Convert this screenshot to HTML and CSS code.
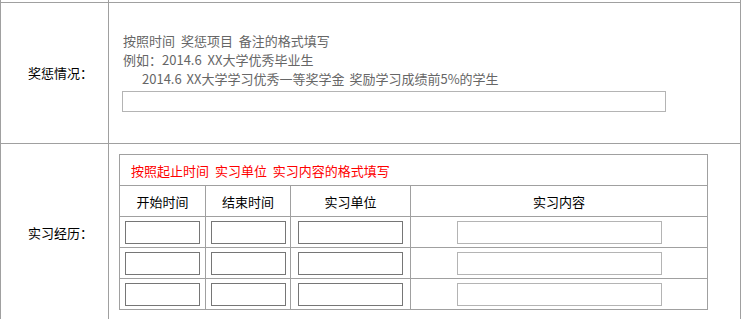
FILE: index.html
```html
<!DOCTYPE html>
<html lang="zh-CN">
<head>
  <meta charset="UTF-8" />
  <title>个人信息填写</title>
  <link rel="stylesheet" href="styles.css">
</head>
<body>

  <!-- 信息表格 -->
  <table class="form">
    <tr class="cut">
      <td class="label"></td>
      <td class="field"></td>
    </tr>

    <!-- 奖惩情况 -->
    <tr class="award">
      <td class="label">奖惩情况：</td>
      <td class="field">
        <p class="tip">按照时间 奖惩项目 备注的格式填写</p>
        <p class="tip">例如：2014.6 XX大学优秀毕业生</p>
        <p class="tip indent">2014.6 XX大学学习优秀一等奖学金 奖励学习成绩前5%的学生</p>
        <input type="text" class="long" />
      </td>
    </tr>

    <!-- 实习经历 -->
    <tr class="intern">
      <td class="label">实习经历：</td>
      <td class="field">
        <table class="sub">
          <colgroup>
            <col class="c1" />
            <col class="c2" />
            <col class="c3" />
            <col class="c4" />
          </colgroup>
          <tr>
            <td colspan="4" class="red">按照起止时间 实习单位 实习内容的格式填写</td>
          </tr>
          <tr>
            <th>开始时间</th>
            <th>结束时间</th>
            <th>实习单位</th>
            <th>实习内容</th>
          </tr>
          <tr>
            <td><input type="text" class="date" /></td>
            <td><input type="text" class="date" /></td>
            <td><input type="text" class="unit" /></td>
            <td><input type="text" class="content" /></td>
          </tr>
          <tr>
            <td><input type="text" class="date" /></td>
            <td><input type="text" class="date" /></td>
            <td><input type="text" class="unit" /></td>
            <td><input type="text" class="content" /></td>
          </tr>
          <tr>
            <td><input type="text" class="date" /></td>
            <td><input type="text" class="date" /></td>
            <td><input type="text" class="unit" /></td>
            <td><input type="text" class="content" /></td>
          </tr>
        </table>
      </td>
    </tr>
  </table>

</body>
</html>
```

FILE: styles.css
```css
body {
  margin: 0;
  font-family: "Noto Sans CJK SC", sans-serif;
  font-size: 13px;
  color: #000;
  background: #fff;
}

/* 바깥 표 */
.form {
  width: 741px;
  border-collapse: collapse;
}

.form > tbody > tr > td {
  border: 1px solid #a0a0a0;
  padding: 0;
}

/* 위에 잘린 줄 */
.form .cut td {
  height: 2px;
  border-top: none;
}

.label {
  width: 108px;
  text-align: right;
  padding-right: 15px !important;
  box-sizing: border-box;
  line-height: 16px;
}

.field {
  vertical-align: middle;
}

/* 奖惩情况 */
.award .field {
  height: 140px;
  padding-left: 13px !important;
}

.tip {
  margin: 0;
  padding-left: 1px;
  line-height: 19px;
  color: #666;
  word-spacing: 3px;
}

.tip.indent {
  padding-left: 20px;
  word-spacing: 2px;
}

.long {
  display: block;
  box-sizing: border-box;
  width: 544px;
  height: 21px;
  margin: 3px 0 3px;
  border: 1px solid #b4b4b4;
  padding: 0;
}

/* 实习经历 */
.intern .field {
  padding: 10px 0 11px 10px !important;
  vertical-align: top;
}

.sub {
  width: 589px;
  border-collapse: collapse;
  table-layout: fixed;
}

.sub td,
.sub th {
  border: 1px solid #a0a0a0;
  height: 30px;
  padding: 0;
  text-align: center;
  font-weight: normal;
}

.sub .c1 { width: 86px; }
.sub .c2 { width: 85px; }
.sub .c3 { width: 120px; }
.sub .c4 { width: 297px; }

.sub .red {
  text-align: left;
  padding-left: 11px;
  color: #f00;
  word-spacing: 3px;
}

.sub input {
  box-sizing: border-box;
  height: 23px;
  padding: 0;
  vertical-align: middle;
}

.date,
.unit {
  border: 1px solid #767676;
}

.date { width: 75px; }
.unit { width: 105px; }

.content {
  width: 205px;
  border: 1px solid #b4b4b4;
}
```
